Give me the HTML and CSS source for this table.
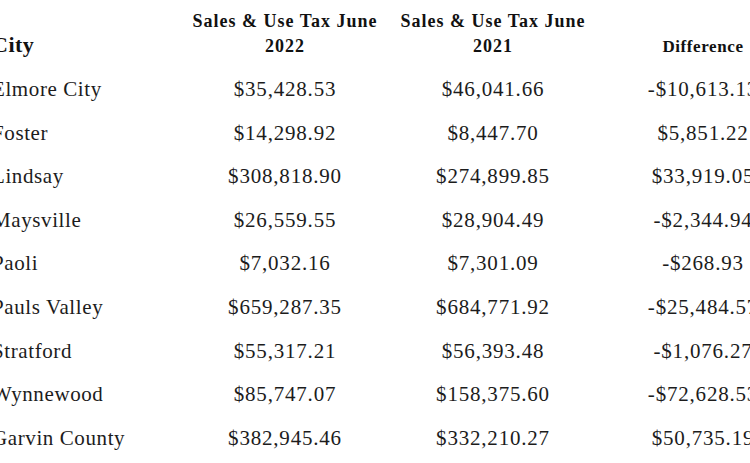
FILE: index.html
```html
<!DOCTYPE html>
<html lang="en">
<head>
<meta charset="utf-8">
<title>Sales &amp; Use Tax</title>
<link rel="stylesheet" href="styles.css">
</head>
<body>
<table class="tax">
  <colgroup>
    <col class="c-city">
    <col class="c-num">
    <col class="c-num">
    <col class="c-diff">
  </colgroup>
  <thead>
    <tr>
      <th class="h-city">City</th>
      <th class="h-num">Sales &amp; Use Tax June<br>2022</th>
      <th class="h-num">Sales &amp; Use Tax June<br>2021</th>
      <th class="h-diff">Difference</th>
    </tr>
  </thead>
  <tbody>
    <tr><td class="city">Elmore City</td><td>$35,428.53</td><td>$46,041.66</td><td>-$10,613.13</td></tr>
    <tr><td class="city">Foster</td><td>$14,298.92</td><td>$8,447.70</td><td>$5,851.22</td></tr>
    <tr><td class="city">Lindsay</td><td>$308,818.90</td><td>$274,899.85</td><td>$33,919.05</td></tr>
    <tr><td class="city">Maysville</td><td>$26,559.55</td><td>$28,904.49</td><td>-$2,344.94</td></tr>
    <tr><td class="city">Paoli</td><td>$7,032.16</td><td>$7,301.09</td><td>-$268.93</td></tr>
    <tr><td class="city">Pauls Valley</td><td>$659,287.35</td><td>$684,771.92</td><td>-$25,484.57</td></tr>
    <tr><td class="city">Stratford</td><td>$55,317.21</td><td>$56,393.48</td><td>-$1,076.27</td></tr>
    <tr><td class="city">Wynnewood</td><td>$85,747.07</td><td>$158,375.60</td><td>-$72,628.53</td></tr>
    <tr><td class="city">Garvin County</td><td>$382,945.46</td><td>$332,210.27</td><td>$50,735.19</td></tr>
  </tbody>
</table>
</body>
</html>
```
FILE: styles.css
```css
html, body {
  margin: 0;
  padding: 0;
  background: #ffffff;
  overflow: hidden;
}

body {
  width: 750px;
  height: 463px;
  box-sizing: border-box;
  padding-top: 9px;
  font-family: "Liberation Serif", "Times New Roman", serif;
  color: #1c1c1c;
}

.tax {
  border-collapse: collapse;
  table-layout: fixed;
  width: 817px;
  margin-left: -8px;
}

.c-city { width: 189px; }
.c-num { width: 208px; }
.c-diff { width: 212px; }

.tax th {
  padding: 0 0 9px 0;
  vertical-align: bottom;
  font-weight: bold;
  color: #111111;
  line-height: 25px;
  text-align: center;
}

.h-num {
  font-size: 18px;
  letter-spacing: 1px;
}

.tax th.h-city {
  text-align: left;
  font-size: 22px;
  letter-spacing: 0.5px;
  padding-bottom: 11px;
}

.h-diff {
  font-size: 17px;
  letter-spacing: 0.6px;
}

.tax td {
  padding: 0;
  height: 43.6px;
  line-height: 43.6px;
  font-size: 21px;
  letter-spacing: 0.8px;
  text-align: center;
  white-space: nowrap;
}

.tax td.city {
  text-align: left;
  letter-spacing: 0.6px;
}
```
